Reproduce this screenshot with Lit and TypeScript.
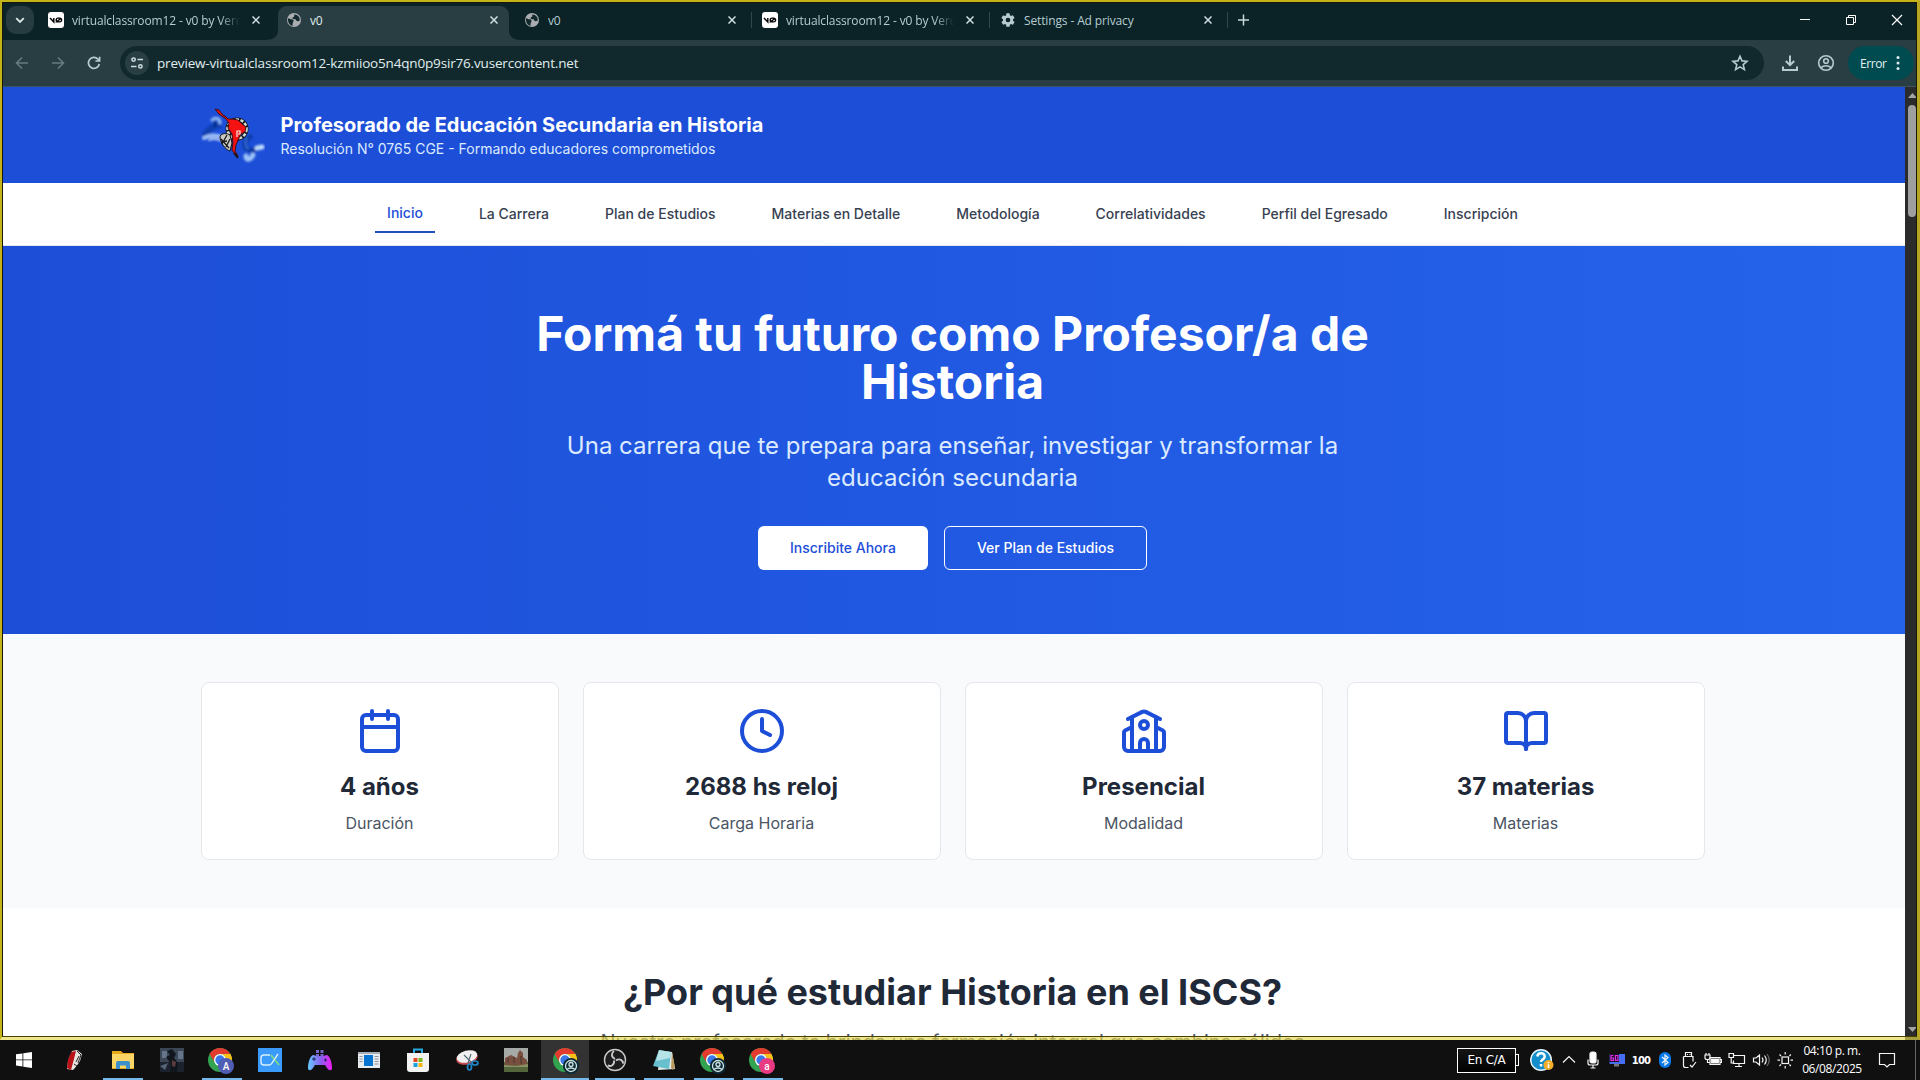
import { LitElement, html, css, svg, nothing } from "lit";
import { customElement } from "lit/decorators.js";
import { classMap } from "lit/directives/class-map.js";

const globe = html`<svg width="16" height="16" viewBox="0 0 16 16">
  <circle cx="8" cy="8" r="7" fill="#a9adaf" />
  <path d="M1.900 6.500C3.200 6.200 4.500 7.200 5.600 7.300 7.400 7.400 7.900 8.600 7.300 9.800 7 11 6.300 11.200 6.600 13.900 4 13.400 1.800 11 1.900 6.500z" fill="#12292d" />
  <path d="M8.200 2.400C10 2.300 11.600 3.200 12.400 4.300 13.500 5.600 13.900 7 13.700 8.800 12.700 8.200 12.500 9.600 11.300 9.200 9.800 9 10.600 7.600 9.400 7.300 8.300 7 6.300 7.300 6.500 5.900 6.600 4.800 8.400 5.200 8.300 4z" fill="#12292d" />
</svg>`;
const gear = html`<svg width="16" height="16" viewBox="0 0 24 24" fill="#b5cbd0">
  <path d="M19.4 13c0-.3.1-.6.1-1s0-.7-.1-1l2.100-1.650a.5.5 0 0 0 .12-.64l-2-3.460a.5.5 0 0 0-.6-.22l-2.500 1a7.300 7.300 0 0 0-1.700-1l-.37-2.650A.5.5 0 0 0 14 2h-4a.5.5 0 0 0-.5.42l-.37 2.650c-.6.24-1.180.57-1.700 1l-2.490-1a.5.5 0 0 0-.6.22l-2 3.460a.5.5 0 0 0 .12.640L4.570 11a8 8 0 0 0 0 2l-2.100 1.650a.5.5 0 0 0-.12.64l2 3.460c.12.220.380.300.600.220l2.490-1c.520.400 1.080.730 1.690.980l.38 2.650c.03.240.240.420.490.420h4c.25 0 .46-.18.490-.42l.38-2.650a7.300 7.300 0 0 0 1.690-.98l2.490 1a.5.5 0 0 0 .6-.22l2-3.460a.5.5 0 0 0-.12-.64zM12 15.500a3.500 3.500 0 1 1 0-7 3.500 3.500 0 0 1 0 7z" />
</svg>`;
const vzero = html`<svg width="16" height="16" viewBox="0 0 16 16">
  <rect width="16" height="16" rx="3" fill="#fff" />
  <path d="M2 6l3.800 4V6M8.500 9.900h3.300a1.800 1.800 0 0 0 1.800-1.800V7.900A1.800 1.800 0 0 0 11.800 6.100H10a1.800 1.800 0 0 0-1.800 1.800v.4a1.800 1.800 0 0 0 .5 1.300zM8.600 9.700l4.400-3.300" fill="none" stroke="#000" stroke-width="1.400" />
</svg>`;

const tabs = [
  { icon: vzero, title: "virtualclassroom12 - v0 by Vercel", active: false, line: false },
  { icon: globe, title: "v0", active: true, line: false },
  { icon: globe, title: "v0", active: false, line: true },
  { icon: vzero, title: "virtualclassroom12 - v0 by Vercel", active: false, line: true },
  { icon: gear, title: "Settings - Ad privacy", active: false, line: true },
];

@customElement("browser-bar")
class BrowserBar extends LitElement {
  static styles = css`
    :host { display: block; font-family: "Open Sans", "Noto Sans", sans-serif; }
    .strip { height: 40px; background: #0b2226; display: flex; align-items: center; box-sizing: border-box; padding-left: 6px; }
    .menu { width: 28px; height: 28px; border-radius: 10px; background: #263c41; display: grid; place-items: center; margin-right: 6px; }
    .tab { width: 238px; height: 40px; box-sizing: border-box; padding: 0 18px 0 8px; display: flex; align-items: center; position: relative; }
    .tab > * { z-index: 1; }
    .shape { position: absolute; left: -13px; top: 6px; z-index: 0; }
    .name { flex: 1; margin-left: 8px; font-size: 12px; letter-spacing: -0.13px; white-space: nowrap; overflow: hidden; color: #b5cdd1; }
    .name.long { -webkit-mask-image: linear-gradient(90deg, #000 88%, transparent 100%); mask-image: linear-gradient(90deg, #000 88%, transparent 100%); margin-right: 12px; }
    .active .name { color: #e0edef; }
    .line { position: absolute; right: 2px; top: 12px; width: 1px; height: 16px; background: #30474b; }
    .plus { margin-left: 3px; }
    .win { margin-left: auto; display: flex; gap: 34px; margin-right: 17px; }
    .bar { height: 47px; background: #293e43; border-bottom: 1px solid #3b5260; box-sizing: border-box; display: flex; align-items: center; padding: 0 6px 0 14px; }
    .nav { display: flex; gap: 20px; margin-right: 18px; }
    .field { flex: 1; height: 34px; border-radius: 17px; background: #11292d; display: flex; align-items: center; padding: 0 15px 0 5px; }
    .site { width: 24px; height: 24px; border-radius: 12px; background: #293e43; display: grid; place-items: center; }
    .url { flex: 1; margin-left: 8px; font-size: 13.5px; letter-spacing: -0.17px; color: #e0edee; white-space: nowrap; }
    .tools { display: flex; gap: 16px; margin: 0 12px 0 16px; }
    .error { width: 66px; height: 34px; box-sizing: border-box; border-radius: 17px; background: #004b50; color: #e2f2f3; font-size: 12px; letter-spacing: -0.4px; display: flex; align-items: center; justify-content: space-between; padding: 0 14px 0 12px; }
  `;
  render() {
    return html`
      <div class="strip">
        <div class="menu"><svg width="12" height="12" viewBox="0 0 12 12" fill="none" stroke="#dbe8ea" stroke-width="1.800"><path d="M2.200 4.200L6 8l3.800-3.800" /></svg></div>
        ${tabs.map((t) => html`
          <div class=${classMap({ tab: true, active: t.active })}>
            ${t.active ? html`<svg class="shape" width="256" height="34" viewBox="0 0 256 34"><path d="M0 34C8 34 13 31 13 24V9C13 4 17 0 22 0h213c5 0 9 4 9 9v15c0 7 5 10 12 10z" fill="#293e43" /></svg>` : nothing}
            ${t.icon}
            <span class=${classMap({ name: true, long: t.title.length > 30 })}>${t.title}</span>
            <svg width="8" height="8" viewBox="0 0 8 8" stroke="#cfe0e3" stroke-width="1.500"><path d="M.5.5l7 7M7.500.5l-7 7" /></svg>
            ${t.line ? html`<span class="line"></span>` : nothing}
          </div>`)}
        <svg class="plus" width="24" height="12" viewBox="-5 0 24 12" stroke="#c6d9dc" stroke-width="1.500"><path d="M5.500 0.500v11M0 6h11" /></svg>
        <div class="win">
          <svg width="12" height="12" viewBox="0 0 12 12" stroke="#fff"><path d="M1 5.500h10" /></svg>
          <svg width="12" height="12" viewBox="0 0 12 12" stroke="#fff" fill="none"><path d="M1.500 3.500h7v7h-7zM3.500 3.500v-2h7v7h-2" /></svg>
          <svg width="12" height="12" viewBox="0 0 12 12" stroke="#fff" stroke-width="1.200"><path d="M1 1l10 10M11 1L1 11" /></svg>
        </div>
      </div>
      <div class="bar">
        <div class="nav">
          <svg width="16" height="16" viewBox="0 0 16 16" fill="none" stroke="#667a7f" stroke-width="1.600"><path d="M14 8H3M8 2.500L2.500 8 8 13.500" /></svg>
          <svg width="16" height="16" viewBox="0 0 16 16" fill="none" stroke="#667a7f" stroke-width="1.600"><path d="M2 8h11M8 2.500L13.500 8 8 13.500" /></svg>
          <svg width="16" height="16" viewBox="0 0 16 16" fill="none" stroke="#b9ccd0" stroke-width="1.700"><path d="M13.300 9A5.500 5.500 0 1 1 12 4.200L13.500 5.800M13.600 1.800v4.200H9.400" /></svg>
        </div>
        <div class="field">
          <div class="site"><svg width="14" height="14" viewBox="0 0 14 14" fill="none" stroke="#cddddf" stroke-width="1.500"><circle cx="3.600" cy="3.600" r="1.700" /><path d="M7.500 3.600H13M1 10.400h5.500" /><circle cx="10.400" cy="10.400" r="1.700" /></svg></div>
          <span class="url">preview-virtualclassroom12-kzmiioo5n4qn0p9sir76.vusercontent.net</span>
          <svg width="18" height="18" viewBox="0 0 18 18" fill="none" stroke="#b5cbd0" stroke-width="1.600"><path d="M9 2.200l2 4.700 5 .4-3.800 3.300 1.200 5L9 12.900l-4.400 2.700 1.200-5L2 7.300l5-.4z" /></svg>
        </div>
        <div class="tools">
          <svg width="20" height="20" viewBox="0 0 20 20" fill="none" stroke="#b5cbd0" stroke-width="2"><path d="M10 2.500v9M5.800 8l4.200 4.200L14.200 8M3 13.500V17h14v-3.500" /></svg>
          <svg width="20" height="20" viewBox="0 0 20 20" fill="none" stroke="#b5cbd0" stroke-width="1.600"><circle cx="10" cy="10" r="7.300" /><circle cx="10" cy="8" r="2.300" /><path d="M4.800 14.800c2.800-2.700 7.600-2.700 10.400 0" /></svg>
        </div>
        <div class="error">Error<svg width="4" height="16" viewBox="0 0 4 16" fill="#dcecee"><circle cx="2" cy="2.500" r="1.500" /><circle cx="2" cy="8" r="1.500" /><circle cx="2" cy="13.500" r="1.500" /></svg></div>
      </div>`;
  }
}

const calendar = svg`<path d="M8 2v4M16 2v4M3 10h18"/><rect width="18" height="18" x="3" y="4" rx="2"/>`;
const clock = svg`<circle cx="12" cy="12" r="10"/><path d="M12 6v6l4 2"/>`;
const school = svg`<path d="M14 22v-4a2 2 0 1 0-4 0v4"/><path d="m18 10 3.447 1.724a1 1 0 0 1 .553.894V20a2 2 0 0 1-2 2H4a2 2 0 0 1-2-2v-7.382a1 1 0 0 1 .553-.894L6 10"/><path d="M18 5v17"/><path d="m4 6 7.106-3.553a2 2 0 0 1 1.788 0L20 6"/><path d="M6 5v17"/><circle cx="12" cy="9" r="2"/>`;
const book = svg`<path d="M12 7v14"/><path d="M3 18a1 1 0 0 1-1-1V4a1 1 0 0 1 1-1h5a4 4 0 0 1 4 4 4 4 0 0 1 4-4h5a1 1 0 0 1 1 1v13a1 1 0 0 1-1 1h-6a3 3 0 0 0-3 3 3 3 0 0 0-3-3z"/>`;

const links = ["Inicio", "La Carrera", "Plan de Estudios", "Materias en Detalle", "Metodología", "Correlatividades", "Perfil del Egresado", "Inscripción"];
const stats = [
  { icon: calendar, value: "4 años", label: "Duración" },
  { icon: clock, value: "2688 hs reloj", label: "Carga Horaria" },
  { icon: school, value: "Presencial", label: "Modalidad" },
  { icon: book, value: "37 materias", label: "Materias" },
];

@customElement("career-page")
class CareerPage extends LitElement {
  static styles = css`
    :host { display: block; background: #fff; font-family: Inter, sans-serif; color: #1f2937; overflow: hidden; }
    h1, h2, h3, p { margin: 0; }
    .head { background: #1d4ed8; height: 96px; }
    .wrap { width: 1504px; margin: 0 auto; }
    .brand { display: flex; align-items: center; gap: 16px; height: 96px; }
    .name { font-size: 20px; line-height: 28px; font-weight: 700; color: #fff; }
    .sub { font-size: 14px; line-height: 20px; color: #dbeafe; }
    .menu { height: 62px; border-bottom: 1px solid #e5e7eb; display: flex; align-items: center; justify-content: center; gap: 32px; }
    .link { padding: 8px 12px; font-size: 14px; line-height: 20px; font-weight: 500; color: #374151; }
    .link.on { color: #1d4ed8; border-bottom: 2px solid #234fbe; }
    .hero { background: linear-gradient(90deg, #1d4ed8, #2563eb); padding: 64px 0; display: flex; flex-direction: column; align-items: center; text-align: center; }
    .hero h1 { width: 896px; font-size: 48px; line-height: 48px; font-weight: 700; color: #fff; }
    .lead { width: 800px; margin: 24px 0 32px; font-size: 24px; line-height: 32px; color: #dbeafe; }
    .acts { display: flex; gap: 16px; }
    .btn { height: 44px; box-sizing: border-box; border: 1px solid #fff; border-radius: 6px; padding: 0 32px 1px; display: flex; align-items: center; font-size: 14px; line-height: 20px; font-weight: 500; color: #fff; }
    .btn.solid { background: #fff; color: #1d4ed8; border: 0; }
    .stats { background: #f9fafb; padding: 48px 0; }
    .cards { display: grid; grid-template-columns: repeat(4, 1fr); gap: 24px; }
    .card { background: #fff; border: 1px solid #e5e7eb; border-radius: 8px; padding: 24px; display: flex; flex-direction: column; align-items: center; }
    .card svg { margin-bottom: 16px; }
    .card h3 { font-size: 24px; line-height: 32px; font-weight: 700; }
    .card p { margin-top: 8px; font-size: 16px; line-height: 24px; color: #4b5563; }
    .why { padding-top: 64px; text-align: center; }
    .why h2 { font-size: 36px; line-height: 40px; font-weight: 700; }
    .why p { margin: 16px auto 0; width: 768px; font-size: 20px; line-height: 28px; color: #4b5563; }
  `;
  render() {
    return html`
      <header class="head"><div class="wrap brand">
        <svg width="64" height="64" viewBox="0 0 64 64">
          <defs><filter id="soft" x="-30%" y="-30%" width="160%" height="160%"><feGaussianBlur stdDeviation=".9" /></filter></defs>
          <g fill="none" stroke-linecap="round" filter="url(#soft)">
            <path d="M18 22c-5 1-10 4-14 9" stroke="#0b3fae" stroke-width="6" />
            <path d="M11 17c3-3 8-2 8 3" stroke="#8db9f3" stroke-width="3" />
            <path d="M14 19v4" stroke="#06308f" stroke-width="3" />
            <path d="M3 35c6-3 12-4 20 0" stroke="#9fc1f6" stroke-width="4" />
            <path d="M8 37c5-2 9-1 12 1" stroke="#e6effd" stroke-width="1.500" />
            <path d="M49 34c-6 4-7 10-1 13 3 1 6 0 8-2" stroke="#0a3aa5" stroke-width="5" />
            <path d="M46 35c-2 4-2 8 1 11" stroke="#3e78df" stroke-width="1.500" />
            <path d="M45 53c0 4 4 5 7-1" stroke="#9cc3f6" stroke-width="5" />
            <path d="M56 45l5-1" stroke="#bcd8fb" stroke-width="5" />
          </g>
          <circle cx="36" cy="26" r="9.500" fill="none" stroke="#14161c" stroke-width="4" />
          <circle cx="36" cy="26" r="9.500" fill="none" stroke="#d4ddd2" stroke-width="2.600" stroke-dasharray="3.200 1.600" />
          <path d="M19 33c2-3 7-3 10-1l2 8-2 8c-4-1-10-8-10-15z" fill="#c9cac4" stroke="#111" />
          <path d="M20 36l8 9M26 32l-5 9M29 36l-4 8M20 39l6-1" stroke="#1b1b1b" stroke-width="1.300" />
          <path d="M14 6l4 1 3 4 4 3 2 2 4 0 6 1 3 3 5 4-1 5-4 2-3 6-2 5-1 6 3 5-3-2-3-4 1-7-1-9-4-6 1-5-4-5-6-4z" fill="#f51212" stroke="#35070c" stroke-width=".9" />
          <path d="M36 34v-6h3v3h-2" fill="none" stroke="#f8eee5" stroke-width="1.200" />
          <path d="M33 50l4 5" stroke="#161616" stroke-width="2" />
        </svg>
        <div><div class="name">Profesorado de Educación Secundaria en Historia</div><div class="sub">Resolución N° 0765 CGE - Formando educadores comprometidos</div></div>
      </div></header>
      <nav class="menu">${links.map((l, i) => html`<span class=${classMap({ link: true, on: i === 0 })}>${l}</span>`)}</nav>
      <section class="hero">
        <h1>Formá tu futuro como Profesor/a de Historia</h1>
        <p class="lead">Una carrera que te prepara para enseñar, investigar y transformar la educación secundaria</p>
        <div class="acts"><span class="btn solid">Inscribite Ahora</span><span class="btn">Ver Plan de Estudios</span></div>
      </section>
      <section class="stats"><div class="wrap cards">${stats.map((s) => html`
        <div class="card">
          <svg width="48" height="48" viewBox="0 0 24 24" fill="none" stroke="#1d4ed8" stroke-width="2" stroke-linecap="round" stroke-linejoin="round">${s.icon}</svg>
          <h3>${s.value}</h3><p>${s.label}</p>
        </div>`)}</div></section>
      <section class="why"><h2>¿Por qué estudiar Historia en el ISCS?</h2><p>Nuestro profesorado te brinda una formación integral que combina sólidos</p></section>`;
  }
}

const chrome = (badge: unknown) => html`<svg width="28" height="28" viewBox="0 0 28 28">
  <circle cx="13" cy="14" r="12" fill="#32a350" />
  <path d="M2.600 8A12 12 0 0 1 23.400 8H13a6 6 0 0 0-5.200 9z" fill="#e33b2e" />
  <path d="M23.400 8A12 12 0 0 1 13 26l5.200-9A6 6 0 0 0 13 8z" fill="#fbc116" />
  <circle cx="13" cy="14" r="6" fill="#fff" /><circle cx="13" cy="14" r="4.700" fill="#3a78e8" />${badge}</svg>`;
const person = svg`<circle cx="19" cy="20" r="8" fill="#0c2a36"/><g fill="none" stroke="#cfe4e4" stroke-width="1.300"><circle cx="19" cy="20" r="5.500"/><circle cx="19" cy="18.500" r="2"/><path d="M15 23.500c2-2 6-2 8 0"/></g>`;
const letter = (ch: string, fill: string) => svg`<circle cx="19" cy="20" r="8" fill=${fill}/><text x="19" y="23.500" text-anchor="middle" font-family="Roboto, sans-serif" font-size="10" font-weight="500" fill="#fff">${ch}</text>`;
const pic = (body: unknown) => html`<svg width="24" height="24" viewBox="0 0 24 24">${body}</svg>`;

const apps = [
  { open: false, icon: pic(svg`<path d="M4 6.300l6.500-.9v6.100H4zM11.300 5.300L20 4v7.500h-8.700zM4 12.300h6.500v6.200L4 17.600zM11.300 12.300H20V20l-8.700-1.300z" fill="#fff"/>`) },
  { open: false, icon: pic(svg`<path d="M10 3l5-1 5 4-2 7-4 6-3 3-6-1 1-8z" fill="#e9e4e0"/><path d="M9 4l5-1-2 8-3 11-4-2 1-8z" fill="#b91218"/><path d="M6 10l3-6M15 3l4 4-3 8M12 16l3 2-3 4M17 8l-3 6" stroke="#222" fill="none"/>`) },
  { open: true, icon: pic(svg`<path d="M1 3h9l2 2h11v16H1z" fill="#e6a91e"/><path d="M1 6h22v14H1z" fill="#fbd566"/><path d="M5 21v-6q0-2 2-2h10q2 0 2 2v6h-4v-3.500H9V21z" fill="#3c91cb"/>`) },
  { open: false, icon: pic(svg`<path d="M0 0h24v24H0z" fill="#3b4757"/><path d="M0 14h24v10H0z" fill="#1b222d"/><path d="M2 3h5v7H2zM18 3h5v8h-5z" fill="#66758a"/><path d="M7 3l5-2 4 5-2 4 4 5-1 9h-7l1-8-5-7 4-2z" fill="#11161d"/><path d="M12 12l4 2-1 5-3-1z" fill="#593c3b"/><path d="M0 18l8-3-3 7z" fill="#546377"/>`) },
  { open: true, icon: chrome(letter("A", "#4f5db5")) },
  { open: false, icon: pic(svg`<path d="M0 0h24v24H0z" fill="#3a9bfa"/><path d="M12 7H6a3 3 0 0 0-3 3v4a3 3 0 0 0 3 3h5q2 0 3-2l6-9" stroke="#d9efff" stroke-width="1.400" fill="none"/><path d="M13 7l3 4M17 12l4 5" stroke="#7ee27a" stroke-width="1.500"/>`) },
  { open: false, icon: pic(svg`<defs><linearGradient id="pad"><stop stop-color="#66caff"/><stop offset=".55" stop-color="#8d5cf0"/><stop offset="1" stop-color="#f51cf5"/></linearGradient></defs><path d="M5 7l4 1h6l4-1c3 1 5 8 5 13 0 3-3 3-5 0l-2-3H7l-2 3c-2 3-5 3-5 0C0 15 2 8 5 7z" fill="url(#pad)"/><path d="M8 2h3v3H8zM12.500 2h3v3h-3zM8 6h3v2.500H8zM12.500 6h3v2.500h-3z" fill="#7667c8"/><path d="M4 11h4M6 9v4M16 12h3M17.500 10.500v3" stroke="#20225c"/>`) },
  { open: false, icon: pic(svg`<path d="M1 4h22v16H1z" fill="#e7eaee"/><path d="M1 4h22v2H1z" fill="#a7adb5"/><path d="M7 7h9v11H7z" fill="#0874d1"/><path d="M2.500 8.500h3M2.500 11h3M2.500 13.500h3M17.500 8.500h4M17.500 11h4M17.500 13.500h4M17.500 16h4" stroke="#8c949c"/>`) },
  { open: false, icon: pic(svg`<path d="M8 6V1.500h8V6" stroke="#24a9e1" stroke-width="2" fill="none"/><path d="M1 5h22v16q0 3-3 3H4q-3 0-3-3z" fill="#f3f3f3"/><path d="M7.500 10h4v4h-4z" fill="#e24a26"/><path d="M12.500 10h4v4h-4z" fill="#79b91c"/><path d="M7.500 15h4v4h-4z" fill="#1a9fe0"/><path d="M12.500 15h4v4h-4z" fill="#f4b410"/>`) },
  { open: false, icon: pic(svg`<ellipse cx="12" cy="10" rx="11" ry="6.500" transform="rotate(-14 12 10)" fill="#c34a50"/><ellipse cx="12" cy="8.500" rx="10.500" ry="6" transform="rotate(-14 12 8.500)" fill="#f2eff0"/><path d="M9 7l8 8M16 6l-3 9" stroke="#586b79" stroke-width="1.200"/><g fill="none" stroke="#2084c4" stroke-width="1.700"><ellipse cx="14.500" cy="19" rx="2" ry="3"/><ellipse cx="20" cy="15" rx="3" ry="2"/></g>`) },
  { open: false, icon: pic(svg`<path d="M0 0h24v24H0z" fill="#a6aaa6"/><path d="M0 14h24v10H0z" fill="#55653b"/><path d="M1 10l6-3 6 3 1-5 2-3 3 3v4l4 3v5H1z" fill="#79503f"/><path d="M4 10v5M10 9v6M17 8v8" stroke="#4b332d"/><path d="M0 17l12 1 12-2v3H0z" fill="#8d8f65"/>`) },
  { open: true, on: true, icon: chrome(person) },
  { open: true, icon: pic(svg`<circle cx="12" cy="12" r="10.500" fill="#1d1c1f" stroke="#c9c9c9" stroke-width="1.400"/><g fill="none" stroke="#c9c9c9" stroke-width="1.900"><path d="M12 11C8 9 8 5 11 3"/><path d="M12 11C8 9 8 5 11 3" transform="rotate(120 12 12)"/><path d="M12 11C8 9 8 5 11 3" transform="rotate(240 12 12)"/></g>`) },
  { open: true, icon: pic(svg`<path d="M8 3l12 1 3 17-17 1z" fill="#dfe9e8"/><path d="M20 4l3 15-2 3-2-2z" fill="#ba9961"/><path d="M7 2l12 2-2 17-16-3z" fill="#68bfcd"/><path d="M7 2l12 2-1 6L4 13z" fill="#b5e3e6"/>`) },
  { open: true, icon: chrome(person) },
  { open: true, icon: chrome(letter("a", "#e83a82")) },
];

const glyph = (body: unknown) => html`<svg width="18" height="18" viewBox="0 0 18 18" fill="none" stroke="#f4f4f4" stroke-width="1.200">${body}</svg>`;
const tray = [
  glyph(svg`<path d="M3 11.500l6-6 6 6"/>`),
  glyph(svg`<rect x="6" y="1" width="6" height="11" rx="2" fill="#fff"/><path d="M4 8.500V12q0 2 2 2h6q2 0 2-2V8.500M9 14v3M6.500 17h5"/>`),
  glyph(svg`<path d="M1.500 3H17v10H1.500z" fill="#466df2" stroke="none"/><path d="M1.500 3h9.500v8H1.500z" fill="#171225" stroke="none"/><path d="M6 13h5v2.500H6z" fill="#777" stroke="none"/><path d="M5.500 4.500H3v4.800h2.500V7H3M7.500 4.500H10v4.800H7.500z" stroke="#e02de5"/>`),
  html`<b class="hundred">100</b>`,
  glyph(svg`<rect x="3" y="1" width="12" height="16" rx="6" fill="#0879e6" stroke="none"/><path d="M6 6l6 5.500L9 14V4l3 2.500L6 12"/>`),
  glyph(svg`<path d="M5.500 1.500h6v4h-6zM3.500 5.500h9.500v5M3.500 5.500v9q0 2 2 2h3M7 3.500h1M9.500 3.500h1M10 14l2 2 4-5"/>`),
  glyph(svg`<path d="M6 6.500h10v7H6z"/><path d="M7.500 8h7v4h-7z" fill="#fff"/><path d="M16 8.500h1.500v3H16M1 4h5v3q0 1.500-2.500 1.500T1 7zM2 4V2M5 4V2M3.500 8.500v3H6"/>`),
  glyph(svg`<path d="M5.500 4.500h11v8h-11v-3M11 12.500v3M7 15.500h7M1 2.500h4.500v4H1zM3.200 6.500V12h2.300"/>`),
  glyph(svg`<path d="M1.500 7H4l3.500-3v10L4 11H1.500zM10 6.500q2 2.500 0 5M12.500 4.500q3.500 4.500 0 9"/><path d="M15 3q4.500 6 0 12" stroke="#686868"/>`),
  glyph(svg`<rect x="6" y="6" width="6.500" height="6.500"/><path d="M9.200 1v2.500M9.200 15v2.500M1.500 9.200H4M14.500 9.200H17M3.500 3.500L5 5M14.800 3.500L13.500 5M3.500 15L5 13.500M14.800 15L13.500 13.500"/>`),
];

@customElement("task-bar")
class TaskBar extends LitElement {
  static styles = css`
    :host { display: flex; height: 40px; background: #101010; color: #fff; align-items: center; font-family: "Open Sans", "Noto Sans", sans-serif; }
    .apps { display: flex; gap: 1.2px; height: 40px; }
    .app { width: 48px; height: 40px; box-sizing: border-box; display: flex; align-items: center; justify-content: center; position: relative; }
    .app + .app svg { margin-left: 1px; }
    .on { background: #333; }
    .open::after { content: ""; position: absolute; left: 5px; right: 3px; bottom: 0; height: 2px; background: #76b9ed; }
    .on::after { left: 0; right: 0; }
    .right { margin-left: auto; display: flex; align-items: center; height: 40px; }
    .lang { width: 59px; height: 25px; box-sizing: border-box; border: 1px solid #fff; background: linear-gradient(#151515, #000); font-family: "DejaVu Sans", sans-serif; font-size: 12px; letter-spacing: -0.25px; display: grid; place-items: center; }
    .cap { width: 3px; height: 12px; box-sizing: border-box; border: 1px solid #fff; border-left: 0; }
    .help { margin: 0 3px 0 11px; }
    .cell { width: 24px; display: flex; align-items: center; justify-content: center; }
    .hundred { font: 700 10px "DejaVu Sans", sans-serif; letter-spacing: -0.8px; }
    .time { width: 70px; text-align: center; font-size: 12px; letter-spacing: -0.4px; line-height: 18px; white-space: nowrap; }
    .note { width: 40px; display: grid; place-items: center; }
    .edge { width: 5px; height: 40px; box-sizing: border-box; border-left: 1px solid #666; margin-left: 8px; }
  `;
  render() {
    return html`
      <div class="apps">${apps.map((a) => html`<div class=${classMap({ app: true, open: a.open, on: !!a.on })}>${a.icon}</div>`)}</div>
      <div class="right">
        <span class="lang">En C/A</span><span class="cap"></span>
        <svg class="help" width="24" height="24" viewBox="0 0 24 24"><circle cx="11" cy="12" r="10.300" fill="#118ecb" stroke="#e5f5ff" stroke-width="1.500" /><path d="M7.300 8.500C8 4 15 4.500 14.700 8.600c-.2 3-3.700 2.900-3.700 5.400M11 16v2.500" fill="none" stroke="#fff" stroke-width="2.500" /><circle cx="18.500" cy="17" r="5" fill="#f3ad27" /><path d="M18.500 14v1.300M18.500 16.200v3.800" stroke="#fff" stroke-width="1.600" /></svg>
        ${tray.map((t) => html`<span class="cell">${t}</span>`)}
        <div class="time">04:10 p. m.<br />06/08/2025</div>
        <span class="note">${glyph(svg`<path d="M1.500 2.500h15v11h-5L9 16l-2.500-2.500h-5z"/>`)}</span>
        <span class="edge"></span>
      </div>`;
  }
}

@customElement("app-root")
class AppRoot extends LitElement {
  static styles = css`
    :host { display: block; width: 1920px; height: 1080px; overflow: hidden; position: relative; }
    .view { height: 953px; display: flex; overflow: hidden; }
    .page { flex: 1; height: 953px; }
    .scroll { width: 15px; box-sizing: border-box; background: #2b2b2b; display: flex; flex-direction: column; align-items: flex-start; padding: 6px 0 8px 3px; }
    .thumb { width: 8px; height: 112px; margin-top: 7px; border-radius: 4px; background: #9f9f9f; }
    .down { margin-top: auto; }
    .frame { position: absolute; left: 0; top: 0; width: 1920px; height: 1040px; box-sizing: border-box; border: 2px solid #c3b41b; border-right: 3px solid #b7a622; border-bottom: 3px solid rgba(229, 216, 75, 0.65); }
    .inner { position: absolute; left: 2px; top: 2px; width: 1915px; height: 1035px; box-sizing: border-box; border: 1px solid #171707; border-bottom-color: #4a4100; }
  `;
  render() {
    return html`
      <browser-bar></browser-bar>
      <div class="view">
        <career-page class="page"></career-page>
        <div class="scroll">
          <svg width="9" height="5" viewBox="0 0 9 5" fill="#a4a4a4"><path d="M0 5L4.500 0 9 5z" /></svg>
          <div class="thumb"></div>
          <svg class="down" width="9" height="5" viewBox="0 0 9 5" fill="#a4a4a4"><path d="M0 0l4.500 5L9 0z" /></svg>
        </div>
      </div>
      <task-bar></task-bar>
      <div class="frame"></div><div class="inner"></div>`;
  }
}
